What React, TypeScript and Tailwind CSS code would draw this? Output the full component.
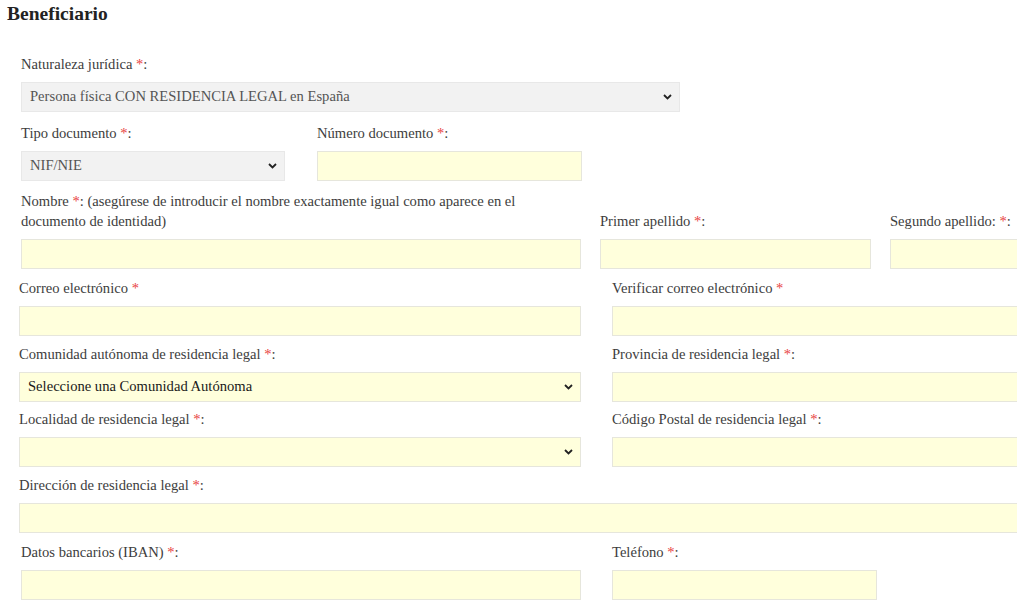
import React from 'react';

const font = { fontFamily: '"Liberation Serif", "DejaVu Serif", serif' };

const Req = () => <span className="text-[#e8423f]">*</span>;

const Label: React.FC<{ children: React.ReactNode; className?: string }> = ({ children, className }) => (
  <div className={`text-[14.6px] leading-[20px] text-[#3d3d3d] mb-2 ${className || ''}`}>{children}</div>
);

const Input: React.FC<{ className?: string }> = ({ className }) => (
  <div className={`h-[30px] bg-[#ffffdc] border border-[#e6e6dc] ${className || ''}`} />
);

const Chevron = () => (
  <svg width="9" height="6" viewBox="0 0 9 6" className="shrink-0">
    <path d="M1 1l3.5 3.5L8 1" fill="none" stroke="#222" strokeWidth="1.8" />
  </svg>
);

const Select: React.FC<{ value?: string; className?: string; gray?: boolean; dark?: boolean }> = ({
  value,
  className,
  gray,
  dark,
}) => (
  <div
    className={`h-[30px] flex items-center justify-between pl-[8px] pr-[7px] border ${
      gray ? 'bg-[#f2f2f2] border-[#e8e8e8]' : 'bg-[#ffffdc] border-[#e6e6dc]'
    } ${className || ''}`}
  >
    <span className={`text-[14.6px] ${dark ? 'text-[#1a1a1a]' : 'text-[#555]'}`}>{value}</span>
    <Chevron />
  </div>
);

export default function App() {
  return (
    <div className="w-[1017px] h-[608px] overflow-hidden bg-white" style={font}>
      <div className="w-[1300px]">
        <h2 className="pl-[7px] pt-[3px] text-[19.5px] leading-[22px] font-bold text-[#222]">Beneficiario</h2>

        {/* Naturaleza */}
        <div className="pl-[21px] mt-[29px]">
          <Label>
            Naturaleza jurídica <Req />:
          </Label>
          <Select gray className="w-[659px]" value="Persona física CON RESIDENCIA LEGAL en España" />
        </div>

        {/* Documento */}
        <div className="pl-[21px] mt-[11px] flex gap-[32px]">
          <div className="w-[264px]">
            <Label>
              Tipo documento <Req />:
            </Label>
            <Select gray value="NIF/NIE" />
          </div>
          <div className="w-[265px]">
            <Label>
              Número documento <Req />:
            </Label>
            <Input />
          </div>
        </div>

        {/* Nombre y apellidos */}
        <div className="pl-[21px] mt-[10px] flex gap-[19px] items-end">
          <div className="w-[560px]">
            <Label>
              Nombre <Req />: (asegúrese de introducir el nombre exactamente igual como aparece en el documento de
              identidad)
            </Label>
            <Input />
          </div>
          <div className="w-[271px]">
            <Label>
              Primer apellido <Req />:
            </Label>
            <Input />
          </div>
          <div className="w-[270px]">
            <Label>
              Segundo apellido: <Req />:
            </Label>
            <Input />
          </div>
        </div>

        {/* Correo */}
        <div className="pl-[19px] mt-[9px] flex gap-[31px]">
          <div className="w-[562px]">
            <Label>
              Correo electrónico <Req />
            </Label>
            <Input />
          </div>
          <div className="w-[562px]">
            <Label>
              Verificar correo electrónico <Req />
            </Label>
            <Input />
          </div>
        </div>

        {/* Comunidad / Provincia */}
        <div className="pl-[19px] mt-[8px] flex gap-[31px]">
          <div className="w-[562px]">
            <Label>
              Comunidad autónoma de residencia legal <Req />:
            </Label>
            <Select dark value="Seleccione una Comunidad Autónoma" />
          </div>
          <div className="w-[562px]">
            <Label>
              Provincia de residencia legal <Req />:
            </Label>
            <Input />
          </div>
        </div>

        {/* Localidad / CP */}
        <div className="pl-[19px] mt-[7px] flex gap-[31px]">
          <div className="w-[562px]">
            <Label>
              Localidad de residencia legal <Req />:
            </Label>
            <Select />
          </div>
          <div className="w-[562px]">
            <Label>
              Código Postal de residencia legal <Req />:
            </Label>
            <Input />
          </div>
        </div>

        {/* Dirección */}
        <div className="pl-[19px] mt-[8px]">
          <Label>
            Dirección de residencia legal <Req />:
          </Label>
          <Input className="w-[1155px]" />
        </div>

        {/* IBAN / Teléfono */}
        <div className="pl-[21px] mt-[9px] flex gap-[31px]">
          <div className="w-[560px]">
            <Label>
              Datos bancarios (IBAN) <Req />:
            </Label>
            <Input />
          </div>
          <div className="w-[265px]">
            <Label>
              Teléfono <Req />:
            </Label>
            <Input />
          </div>
        </div>
      </div>
    </div>
  );
}
